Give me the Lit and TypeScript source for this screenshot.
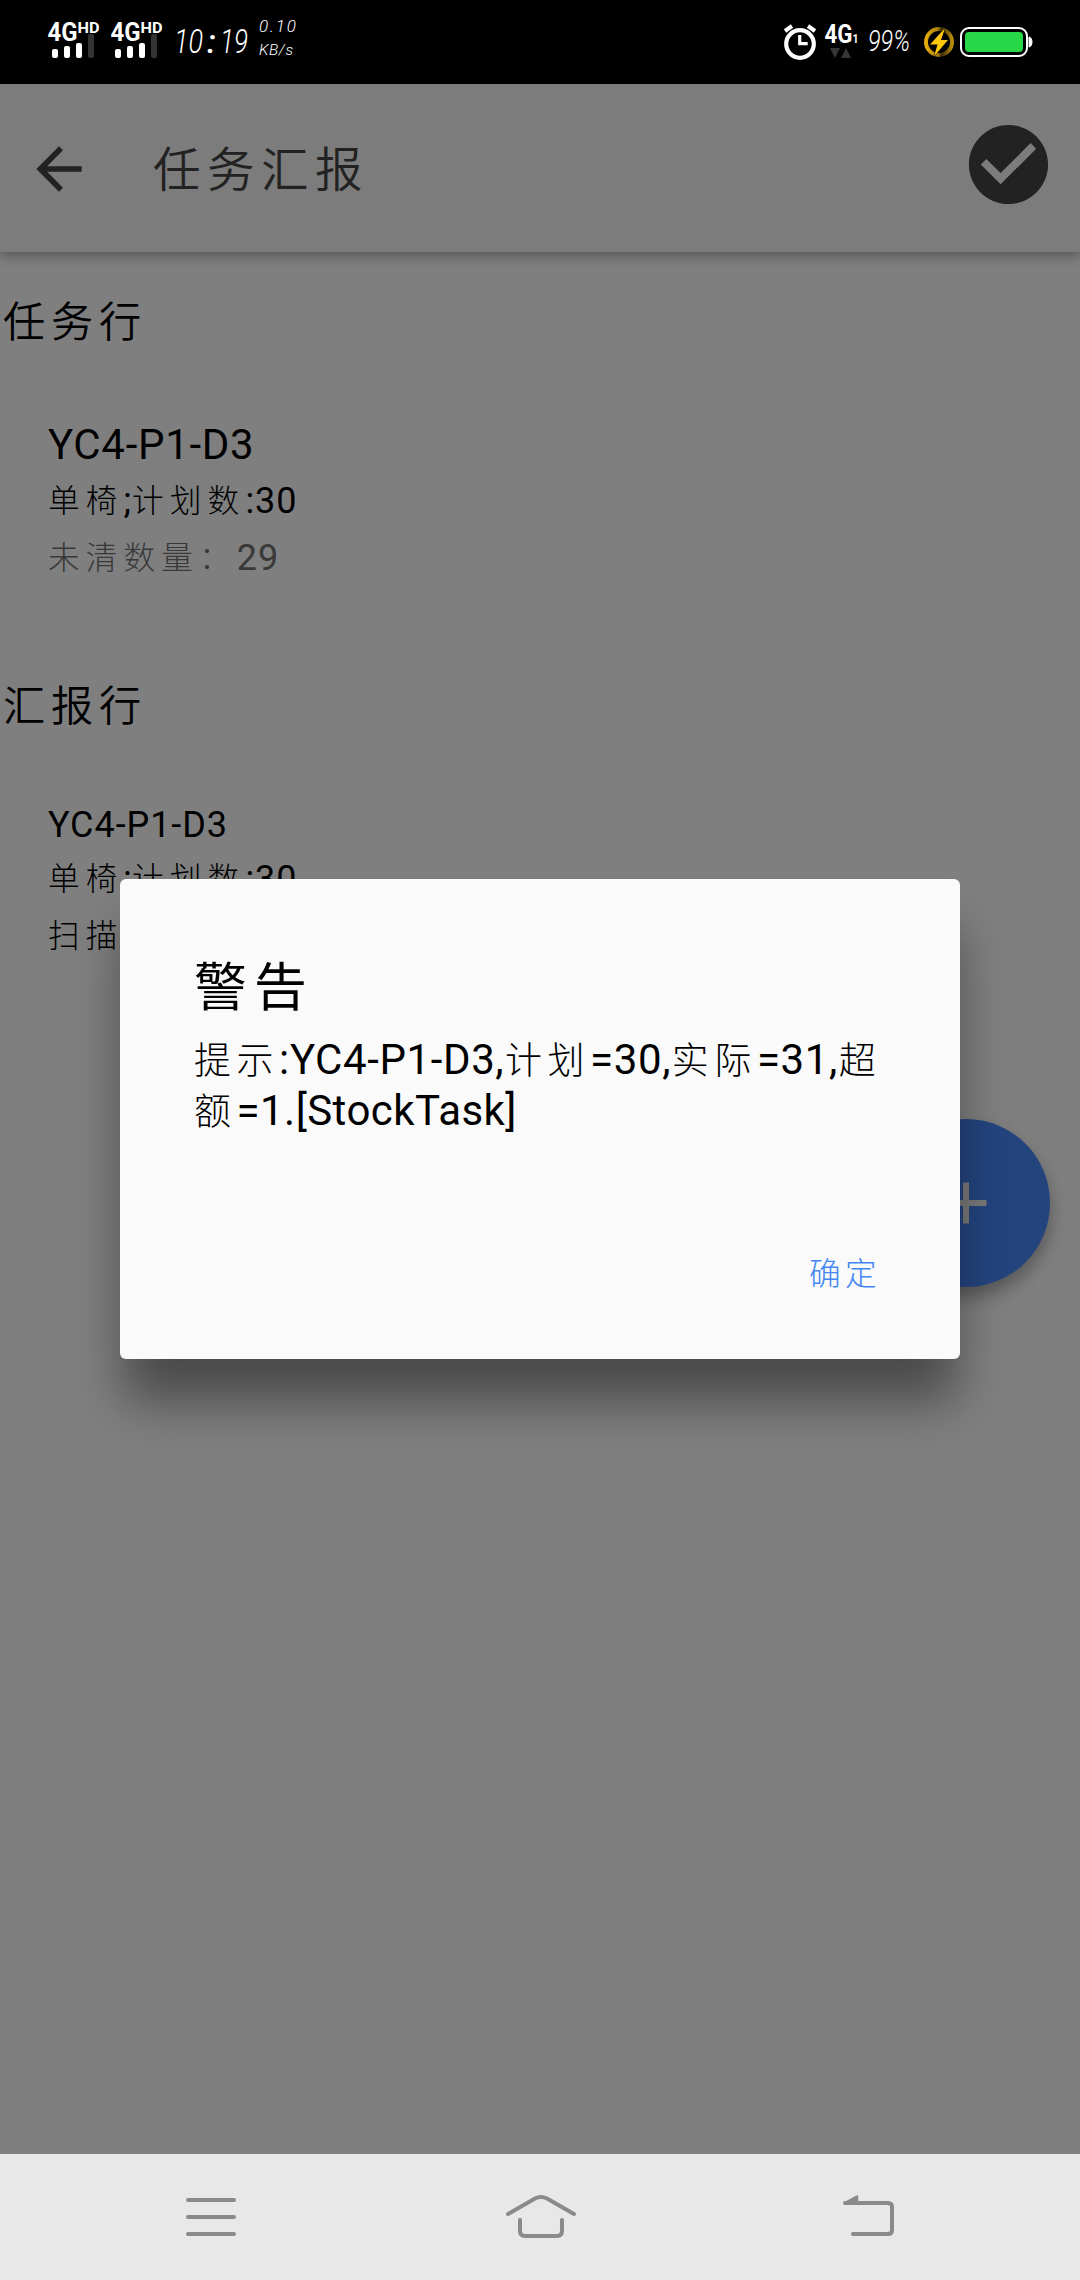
import { LitElement, html, css } from "lit";
import { customElement } from "lit/decorators.js";

// Wraps runs of Chinese characters so they can be sized apart from Latin text.
const mixed = (s: string) =>
  s.split(/([\u4e00-\u9fff\uff1a]+)/).map((p, i) => (i % 2 ? html`<span class="han">${p}</span>` : p));

const signal = () => html`<svg class="signal" width="54" height="84" viewBox="0 0 54 84">
  <g fill="#fff" font-family="Roboto" font-weight="700">
    <text x="-.5" y="41" font-size="25.5" textLength="30" lengthAdjust="spacingAndGlyphs">4G</text>
    <text x="29.5" y="32.800" font-size="14" textLength="22" lengthAdjust="spacingAndGlyphs">HD</text>
    <rect x="4" y="49" width="6" height="9" rx="2"/>
    <rect x="16" y="46" width="6" height="12" rx="2"/>
    <rect x="28" y="43" width="6" height="15" rx="2"/>
    <rect x="40" y="34" width="6" height="24" rx="2" fill="#333"/>
  </g></svg>`;

@customElement("status-bar")
class StatusBar extends LitElement {
  static styles = css`
    :host { display: flex; justify-content: space-between; height: 84px; background: #000; }
    div { display: flex; }
    .left { padding-left: 48px; }
    .right { padding-right: 44px; }
    .signal { margin-right: 9px; }
    svg { display: block; overflow: visible; }
  `;
  render() {
    return html`
      <div class="left">
        ${signal()}${signal()}
        <svg width="130" height="84" viewBox="174 0 130 84" fill="#fff" font-family="Roboto" font-style="italic">
          <g font-size="34" font-weight="300">
            <text x="174" y="53" textLength="29" lengthAdjust="spacingAndGlyphs">10</text>
            <text x="207" y="53" font-weight="500">:</text>
            <text x="220" y="53" textLength="28" lengthAdjust="spacingAndGlyphs">19</text>
          </g>
          <text x="259" y="32" font-size="17" font-weight="300" textLength="37">0.10</text>
          <text x="259" y="54.5" font-size="15.5" font-weight="300" textLength="34">KB/s</text>
        </svg>
      </div>
      <div class="right">
        <svg width="256" height="84" viewBox="780 0 256 84">
          <defs>
            <linearGradient id="ring" x1="0" y1="1" x2="1" y2="1">
              <stop offset="0" stop-color="#e3ac08"/><stop offset=".45" stop-color="#a87f08"/>
              <stop offset=".6" stop-color="#3a2c04"/><stop offset="1" stop-color="#b98c08"/>
            </linearGradient>
          </defs>
          <g fill="none" stroke="#fff">
            <circle cx="800" cy="44" r="13.8" stroke-width="4.2"/>
            <path d="M785 31l7-5M808 26l7 5" stroke-width="4"/>
            <path d="M799.7 35v8.700h8" stroke-width="3.2"/>
          </g>
          <g fill="#fff" font-family="Roboto">
            <text x="824.500" y="43" font-size="25" font-weight="700" textLength="28" lengthAdjust="spacingAndGlyphs">4G</text>
            <text x="852.500" y="43" font-size="13" font-weight="700" textLength="6" lengthAdjust="spacingAndGlyphs">1</text>
            <text x="868" y="51" font-size="29" font-weight="300" font-style="italic" textLength="42" lengthAdjust="spacingAndGlyphs">99%</text>
          </g>
          <path d="M830 48h10l-5 10zM841 58h10l-5-10z" fill="#363636"/>
          <circle cx="939" cy="42" r="13" fill="none" stroke="url(#ring)" stroke-width="4"/>
          <path d="M945 28l-15 16.500h7.500l-3.500 12 14-16.500h-7z" fill="#ffc80a" stroke="#000" stroke-width="1" paint-order="stroke"/>
          <rect x="961" y="28" width="66" height="28" rx="8" fill="none" stroke="#fff" stroke-width="2"/>
          <rect x="965" y="32" width="58" height="20" rx="4" fill="#28d747"/>
          <path d="M1029 37a3 5 0 0 1 0 10z" fill="#fff" stroke="#fff"/>
        </svg>
      </div>`;
  }
}

@customElement("nav-bar")
class NavBar extends LitElement {
  static styles = css`
    :host { display: block; height: 126px; background: #e8e8e8; }
    svg { display: block; }
  `;
  render() {
    return html`<svg width="1080" height="126" viewBox="0 2154 1080 126" fill="none" stroke="#8a8a8a" stroke-width="4" stroke-linecap="round">
      <path d="M188 2200h46M188 2217h46M188 2234h46"/>
      <path d="M508 2214l27-15.500q6-3 12 0l27 15.500M520 2220v11q0 5 5 5h32q5 0 5-5v-11"/>
      <path d="M853 2234h35q4 0 4-4v-23q0-4-4-4h-43"/>
      <path d="M845 2203l12-6.500v6.500z" fill="#8a8a8a" stroke-width="2.500" stroke-linejoin="round"/>
    </svg>`;
  }
}

@customElement("app-root")
class AppRoot extends LitElement {
  static styles = css`
    :host {
      display: flex; flex-direction: column; position: relative; width: 1080px; height: 2280px;
      overflow: hidden; background: #7f7f7f; color: #000;
      font-family: Roboto, "Noto Sans CJK SC", sans-serif;
    }
    .han { font-family: "Noto Sans CJK SC", sans-serif; font-weight: 300; font-size: .88em; letter-spacing: .136em; line-height: 1; }
    .bar {
      display: flex; align-items: center; height: 168px; background: #7c7c7c; color: #222;
      box-shadow: 0 4px 12px rgba(0,0,0,.32); box-sizing: border-box; padding: 0 23px 0 25px; z-index: 0;
    }
    .back { margin-top: 2px; }
    .title { margin-left: 60px; font-size: 54px; line-height: 60px; padding-top: 2px; flex: 1; }
    .check { margin-bottom: 7px; margin-right: 1.5px; }
    main { flex: 1; display: flex; flex-direction: column; }
    .section { font-size: 48px; line-height: 60px; padding: 39px 0 1px 3px; height: 60px; }
    .section .han, .title .han { font-weight: 350; }
    .item { display: flex; flex-direction: column; padding-left: 48px; white-space: nowrap; }
    .item.first { padding-top: 63px; height: 221px; }
    .item.second { padding-top: 61px; }
    .big { font-size: 42px; line-height: 60px; height: 58px; letter-spacing: .7px; }
    .mid { font-size: 36px; line-height: 56px; height: 54px; letter-spacing: .95px; }
    .row { font-size: 36px; line-height: 56px; height: 57px; letter-spacing: .9px; }
    .row .han { letter-spacing: 6.1px; vertical-align: 1px; }
    .muted { color: #393939; }
    .fab {
      position: absolute; left: 882px; top: 1119px; width: 168px; height: 168px; border-radius: 50%;
      background: #24447e; box-shadow: 0 10px 18px rgba(0,0,0,.32);
      display: flex; align-items: center; justify-content: center;
    }
    .dialog {
      position: absolute; left: 120px; top: 879px; width: 840px; height: 480px; box-sizing: border-box;
      padding: 72px 70px 0 74px; border-radius: 6px; background: #fafafa; display: flex; flex-direction: column;
      box-shadow: 0 46px 50px -4px rgba(0,0,0,.42);
    }
    .heading { font-size: 60px; line-height: 70px; height: 83px; }
    .heading .han { font-weight: 400; }
    .message { font-size: 42px; line-height: 51px; white-space: nowrap; letter-spacing: .6px; }
    .message .han { letter-spacing: 5.6px; }
    .line { height: 51px; }
    .line + .line { letter-spacing: .45px; }
    .ok { margin-top: 112px; align-self: flex-end; margin-right: 9px; font-size: 36px; line-height: 50px; color: #4285f4; }
    .line .han + .han { margin-left: .8px; }
  `;
  render() {
    return html`
      <status-bar></status-bar>
      <header class="bar">
        <svg class="back" width="68" height="68" viewBox="0 0 24 24" fill="#222"><path d="M20 11H7.830l5.590-5.590L12 4l-8 8 8 8 1.410-1.410L7.830 13H20v-2z"/></svg>
        <div class="title">${mixed("任务汇报")}</div>
        <svg class="check" width="95" height="95" viewBox="0 0 24 24" fill="#222"><path d="M12 2C6.480 2 2 6.480 2 12s4.480 10 10 10 10-4.480 10-10S17.520 2 12 2zm-2 15l-5-5 1.410-1.410L10 14.170l7.590-7.590L19 8l-9 9z"/></svg>
      </header>
      <main>
        <div class="section">${mixed("任务行")}</div>
        <div class="item first">
          <div class="big">YC4-P1-D3</div>
          <div class="row">${mixed("单椅;计划数:30")}</div>
          <div class="row muted">${mixed("未清数量：29")}</div>
        </div>
        <div class="section">${mixed("汇报行")}</div>
        <div class="item second">
          <div class="mid">YC4-P1-D3</div>
          <div class="row">${mixed("单椅;计划数:30")}</div>
          <div class="row">${mixed("扫描")}</div>
        </div>
      </main>
      <div class="fab"><svg width="42" height="42" viewBox="0 0 42 42"><path d="M21 .5v41M.5 21h41" stroke="#797979" stroke-width="6"/></svg></div>
      <nav-bar></nav-bar>
      <div class="dialog">
        <div class="heading">${mixed("警告")}</div>
        <div class="message">
          <div class="line">${mixed("提示:YC4-P1-D3,计划=30,实际=31,超")}</div>
          <div class="line">${mixed("额=1.[StockTask]")}</div>
        </div>
        <div class="ok">${mixed("确定")}</div>
      </div>`;
  }
}
